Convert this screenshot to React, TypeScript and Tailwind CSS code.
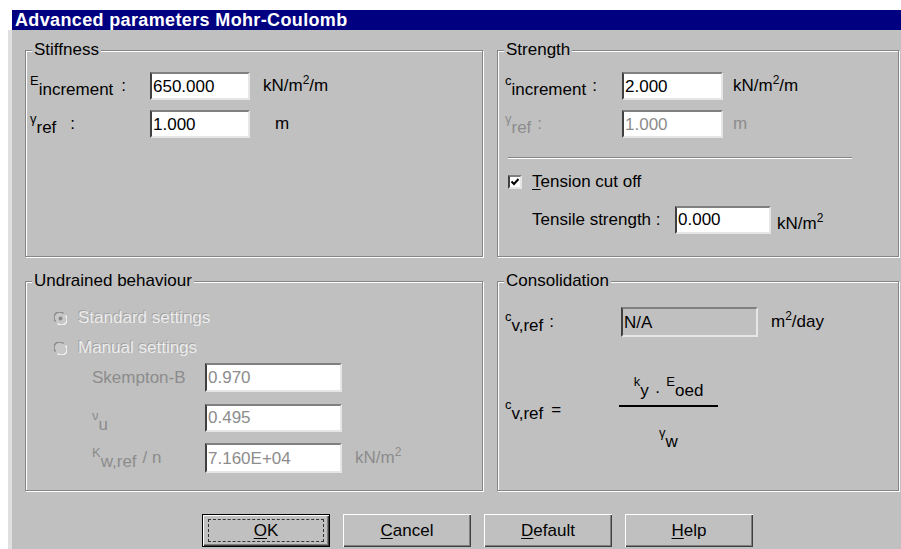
import type { ReactNode } from 'react';

// Win9x-style "Advanced parameters" dialog for the Mohr-Coulomb soil model.

function Group({ title, className, children }: { title: string; className: string; children?: ReactNode }) {
  return (
    <div className={`relative border border-[#858585] shadow-[inset_1px_1px_0_#fff,1px_1px_0_#fff] ${className}`}>
      <span className="absolute -top-[11px] left-[6px] bg-[#c0c0c0] px-[2px] leading-[20px]">{title}</span>
      {children}
    </div>
  );
}

function Field({ value, className, muted }: { value: string; className: string; muted?: boolean }) {
  return (
    <div
      className={`flex items-center border-2 border-t-[#808080] border-l-[#404040] border-r-[#e6e6e6] border-b-[#e6e6e6] bg-white pl-[1px] leading-none ${
        muted ? 'text-[#8c8c8c]' : 'text-black'
      } ${className}`}
    >
      {value}
    </div>
  );
}

function Sym({ main, sub }: { main: string; sub: string }) {
  return (
    <span className="inline-flex items-start">
      <span className="text-[13px] leading-[13px]">{main}</span>
      <span className="mt-[7px] leading-[17px]">{sub}</span>
    </span>
  );
}

function Sq() {
  return <span className="relative -top-[7px] text-[12px] leading-none">2</span>;
}

function Radio({ checked }: { checked?: boolean }) {
  return (
    <svg width="13" height="13" viewBox="0 0 13 13" className="shrink-0">
      <circle cx="6.5" cy="6.5" r="5.5" fill="#c8c8c8" />
      <path d="M1.6 9.5A5.5 5.5 0 0 1 9.5 1.6" stroke="#8a8a8a" strokeWidth="1.4" fill="none" />
      <path d="M11.4 3.5A5.5 5.5 0 0 1 3.5 11.4" stroke="#f4f4f4" strokeWidth="1.4" fill="none" />
      {checked && <circle cx="6.5" cy="6.5" r="2" fill="#8a8a8a" />}
    </svg>
  );
}

function Checkbox() {
  return (
    <div className="flex h-[14px] w-[14px] items-center justify-center border-2 border-t-[#808080] border-l-[#404040] border-r-[#e6e6e6] border-b-[#e6e6e6] bg-white">
      <svg width="10" height="10" viewBox="0 0 10 10">
        <path d="M1.5 4.5 4 7 8.5 2" stroke="#000" strokeWidth="2" fill="none" />
      </svg>
    </div>
  );
}

function Button({ children, isDefault }: { children: ReactNode; isDefault?: boolean }) {
  return (
    <button
      className={`flex h-[33px] w-[128px] items-center justify-center bg-[#c0c0c0] ${
        isDefault
          ? 'border border-black shadow-[inset_1px_1px_0_#fff,inset_-1px_-1px_0_#404040,inset_-2px_-2px_0_#808080]'
          : 'shadow-[inset_1px_1px_0_#fff,inset_-1px_-1px_0_#404040,inset_-2px_-2px_0_#808080]'
      }`}
    >
      {isDefault ? (
        <span className="flex h-[23px] w-[116px] items-center justify-center border border-dashed border-[#333]">{children}</span>
      ) : (
        children
      )}
    </button>
  );
}

const Embossed = 'text-[#ececec] [text-shadow:-1px_-1px_0_#a2a2a2]';

export default function App() {
  return (
    <div className="h-[549px] w-[901px] overflow-hidden bg-white pl-[8px] pt-[10px] [font-family:'Liberation_Sans',Arial,sans-serif] text-[17px] text-black">
      <div className="w-[893px]">
        <div className="ml-[4px] flex h-[20px] items-center bg-[#000080] pl-[3px] text-[18px] font-bold tracking-[0.02em] text-white">
          Advanced parameters Mohr-Coulomb
        </div>

        <div className="h-[520px] border-l-4 border-l-[#e0e0e0] bg-[#c0c0c0] pl-[13px] pt-[20px]">
          <div className="grid grid-cols-[458px_402px] gap-x-[14px] gap-y-[24px]">
            {/* Stiffness */}
            <Group title="Stiffness" className="h-[207px]">
              <div className="grid grid-cols-[124px_100px_auto] items-center gap-y-[10px] pt-[21px]">
                <span className="flex items-center gap-[8px] pl-[4px]">
                  <Sym main="E" sub="increment" />
                  <span>:</span>
                </span>
                <Field value="650.000" className="h-[28px] w-[100px]" />
                <span className="ml-[13px]">
                  kN/m<Sq />/m
                </span>

                <span className="flex items-center gap-[14px] pl-[4px]">
                  <Sym main="γ" sub="ref" />
                  <span>:</span>
                </span>
                <Field value="1.000" className="h-[28px] w-[100px]" />
                <span className="ml-[25px]">m</span>
              </div>
            </Group>

            {/* Strength */}
            <Group title="Strength" className="h-[207px]">
              <div className="grid grid-cols-[124px_101px_auto] items-center gap-y-[10px] pt-[21px]">
                <span className="flex items-center gap-[6px] pl-[7px]">
                  <Sym main="c" sub="increment" />
                  <span>:</span>
                </span>
                <Field value="2.000" className="h-[28px] w-[101px]" />
                <span className="ml-[10px]">
                  kN/m<Sq />/m
                </span>

                <span className="flex items-center gap-[6px] pl-[7px] text-[#8c8c8c]">
                  <Sym main="γ" sub="ref" />
                  <span>:</span>
                </span>
                <Field value="1.000" className="h-[28px] w-[101px]" muted />
                <span className="ml-[10px] text-[#8c8c8c]">m</span>
              </div>

              <div className="ml-[10px] mt-[19px] w-[344px] border-t border-b border-t-[#858585] border-b-white" />

              <div className="ml-[10px] mt-[16px] flex h-[14px] items-center gap-[10px]">
                <Checkbox />
                <span>
                  <span className="underline underline-offset-2">T</span>ension cut off
                </span>
              </div>

              <div className="mt-[14px] flex items-center pl-[34px]">
                <span className="w-[143px]">Tensile strength :</span>
                <Field value="0.000" className="h-[28px] w-[96px]" />
                <span className="ml-[6px] mt-[8px]">
                  kN/m<Sq />
                </span>
              </div>
            </Group>

            {/* Undrained behaviour */}
            <Group title="Undrained behaviour" className="h-[210px]">
              <div className="flex flex-col pt-[27px]">
                <div className={`ml-[28px] flex h-[18px] items-center gap-[11px] ${Embossed}`}>
                  <Radio checked />
                  <span>Standard settings</span>
                </div>
                <div className={`ml-[28px] mt-[12px] flex h-[18px] items-center gap-[11px] ${Embossed}`}>
                  <Radio />
                  <span>Manual settings</span>
                </div>

                <div className="mt-[6px] grid grid-cols-[179px_137px_auto] items-center gap-y-[10px] text-[#8c8c8c]">
                  <span className="pl-[66px]">Skempton-B</span>
                  <Field value="0.970" className="h-[29px] w-[137px]" muted />
                  <span />

                  <span className="pl-[66px]">
                    <Sym main="ν" sub="u" />
                  </span>
                  <Field value="0.495" className="h-[28px] w-[137px]" muted />
                  <span />

                  <span className="flex items-center gap-[6px] pl-[66px]">
                    <Sym main="K" sub="w,ref" />
                    <span>/ n</span>
                  </span>
                  <Field value="7.160E+04" className="h-[30px] w-[137px]" muted />
                  <span className="ml-[13px]">
                    kN/m<Sq />
                  </span>
                </div>
              </div>
            </Group>

            {/* Consolidation */}
            <Group title="Consolidation" className="h-[210px]">
              <div className="flex items-center pl-[7px] pt-[25px]">
                <span className="flex w-[116px] items-center gap-[6px]">
                  <Sym main="c" sub="v,ref" />
                  <span>:</span>
                </span>
                <div className="flex h-[30px] w-[137px] items-center border-2 border-t-[#808080] border-l-[#404040] border-r-[#e6e6e6] border-b-[#e6e6e6] bg-[#c0c0c0] pl-[1px] leading-none">
                  N/A
                </div>
                <span className="ml-[13px]">
                  m<Sq />/day
                </span>
              </div>

              <div className="mt-[38px] flex items-center pl-[7px]">
                <span className="flex w-[114px] items-center gap-[8px]">
                  <Sym main="c" sub="v,ref" />
                  <span>=</span>
                </span>
                <div className="flex w-[99px] flex-col items-center">
                  <span className="flex h-[26px] items-start gap-[6px]">
                    <Sym main="k" sub="y" />
                    <span className="mt-[4px]">·</span>
                    <Sym main="E" sub="oed" />
                  </span>
                  <div className="mt-[4px] h-[2px] w-[99px] bg-black" />
                  <span className="mt-[12px] h-[26px]">
                    <Sym main="γ" sub="w" />
                  </span>
                </div>
              </div>
            </Group>
          </div>

          <div className="mt-[23px] flex gap-[13px] pl-[177px]">
            <Button isDefault>
              <span className="underline underline-offset-2">O</span>K
            </Button>
            <Button>
              <span className="underline underline-offset-2">C</span>ancel
            </Button>
            <Button>
              <span className="underline underline-offset-2">D</span>efault
            </Button>
            <Button>
              <span className="underline underline-offset-2">H</span>elp
            </Button>
          </div>
        </div>
      </div>
    </div>
  );
}
